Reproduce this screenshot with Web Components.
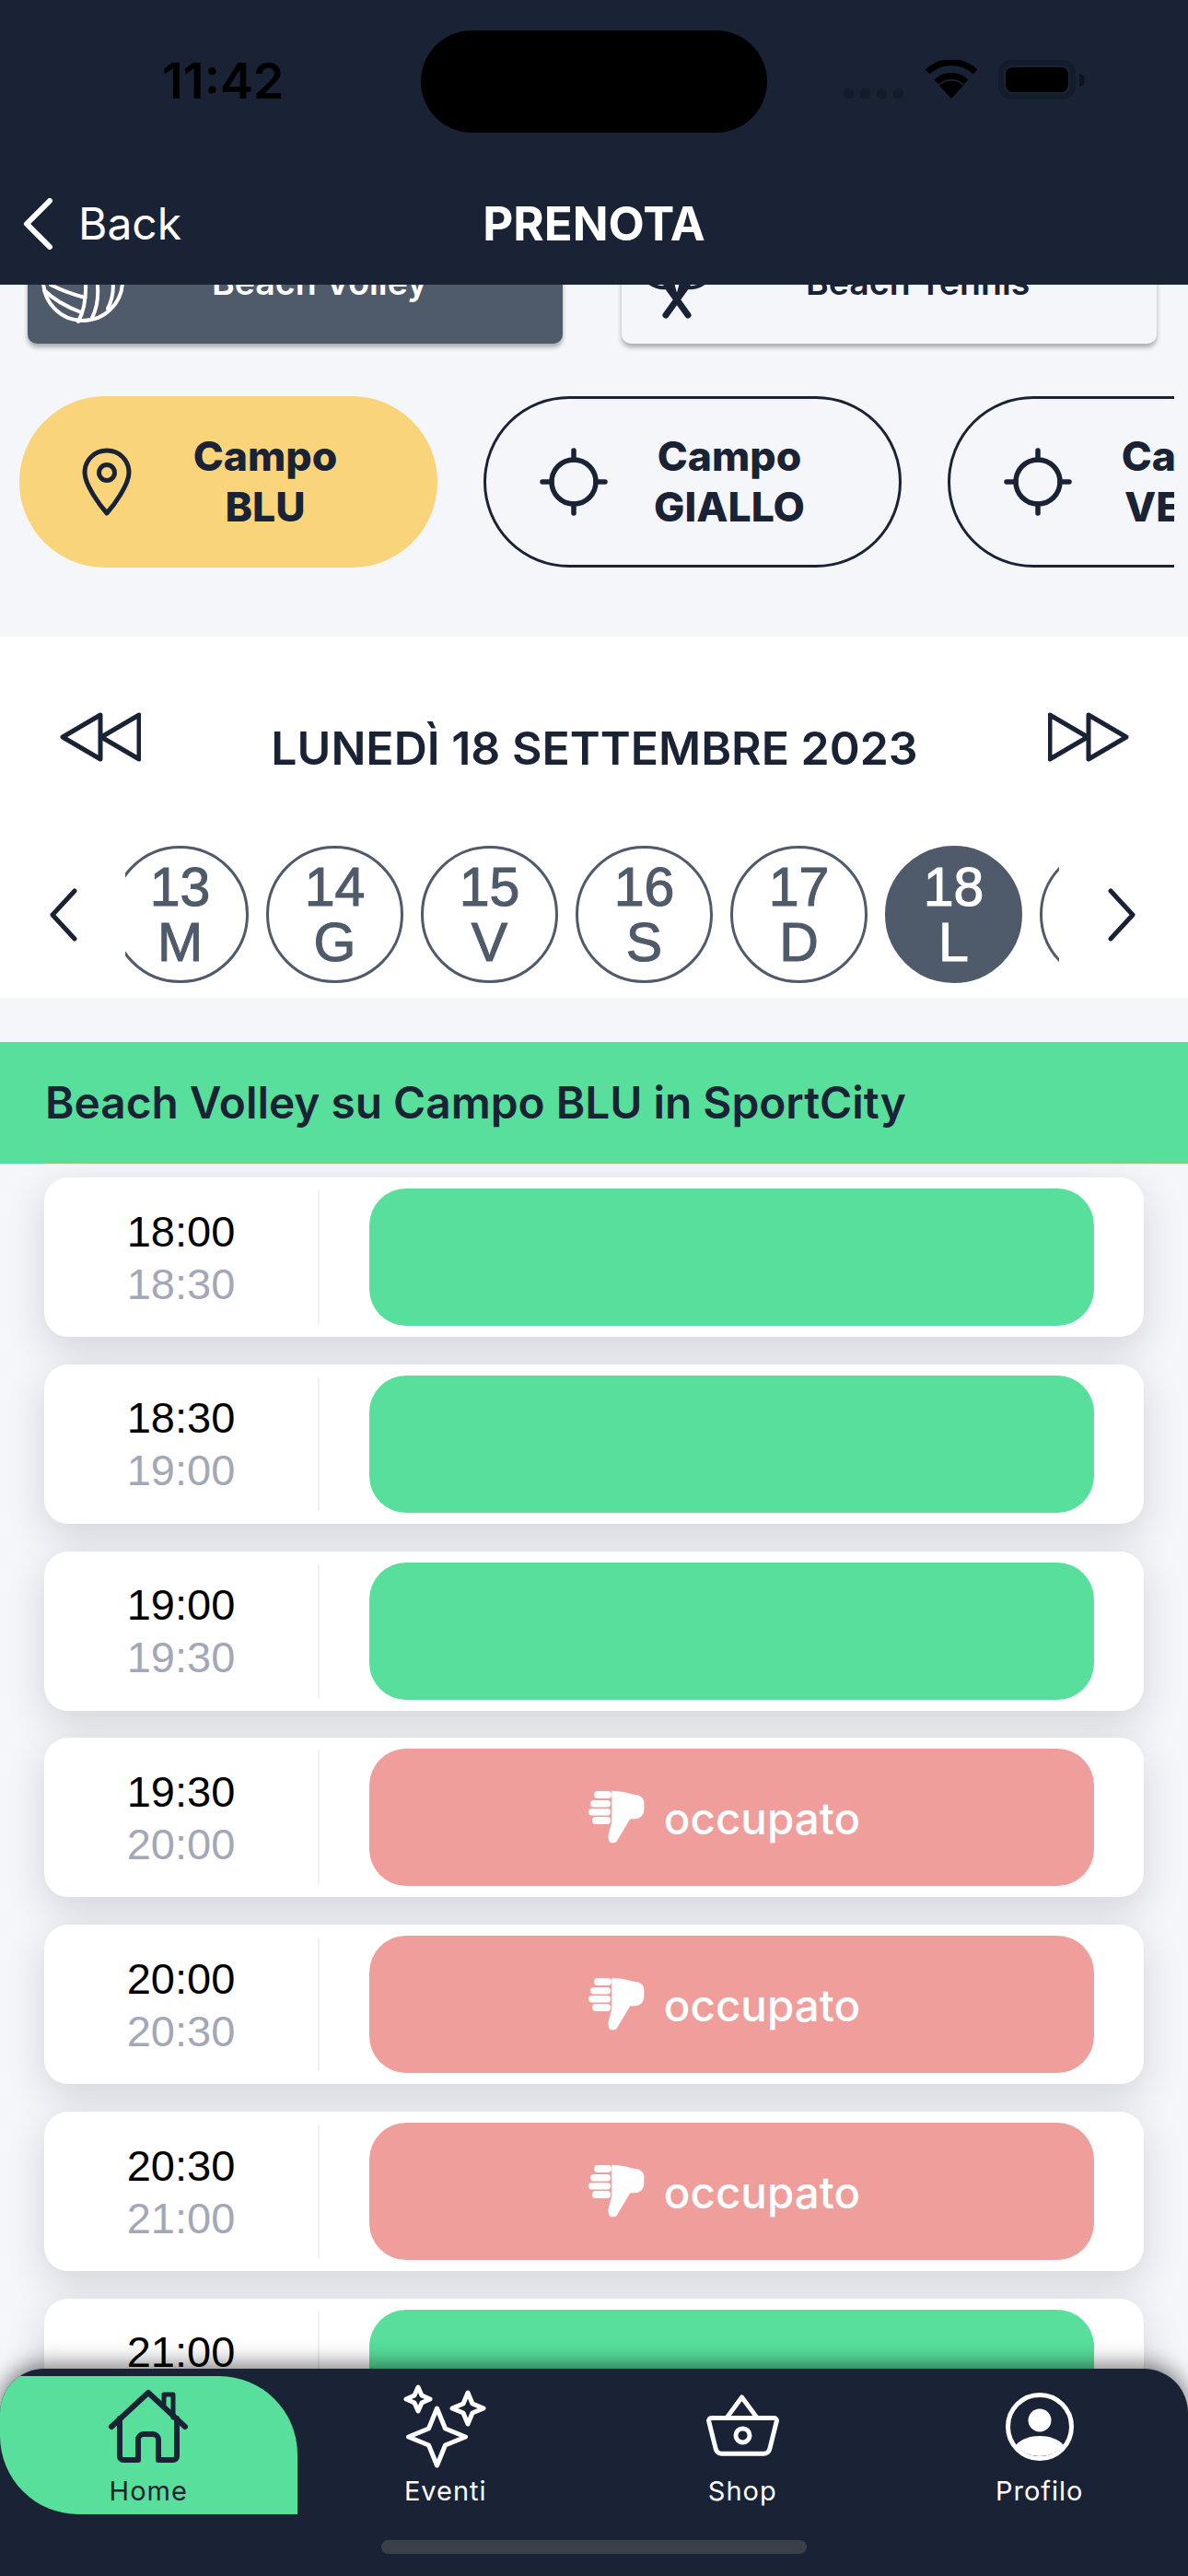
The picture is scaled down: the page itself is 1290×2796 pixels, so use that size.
<!DOCTYPE html>
<html lang="it">
<head>
<meta charset="utf-8">
<title>Prenota</title>
<style>
  html, body { margin: 0; padding: 0; background: #f4f6fa; }
  body { width: 1290px; height: 2796px; overflow: hidden; font-family: "Inter", "Liberation Sans", sans-serif; }
</style>
</head>
<body>
<app-shell>
  <status-bar slot="top"></status-bar>
  <nav-bar slot="top" title="PRENOTA"></nav-bar>

  <sport-row>
    <sport-card active label="Beach Volley">
      <svg slot="icon" width="96" height="96" viewBox="0 0 96 96" fill="none" stroke="#fff" stroke-width="4" stroke-linecap="round">
        <circle cx="48" cy="48" r="43"/>
        <path d="M13 52Q28 60 50 66M6 58Q20 72 46 82M51 50Q52 76 43 92M63 45Q67 70 58 88M80 45Q83 62 75 78"/>
      </svg>
    </sport-card>
    <sport-card label="Beach Tennis">
      <svg slot="icon" width="70" height="96" viewBox="0 0 70 96" fill="none" stroke="#1a2335" stroke-linecap="round">
        <path stroke-width="7" d="M23 85L46 53M47 85L24 53"/>
        <path stroke-width="4" d="M5 50Q17 58 28 54M65 50Q53 58 42 54M35 68L30 50M35 68L40 50"/>
      </svg>
    </sport-card>
  </sport-row>

  <court-row>
    <court-pill active><span>Campo</span><span>BLU</span></court-pill>
    <court-pill><span>Campo</span><span>GIALLO</span></court-pill>
    <court-pill><span>Campo</span><span>VERDE</span></court-pill>
  </court-row>

  <date-panel title="LUNEDÌ 18 SETTEMBRE 2023">
    <day-circle num="13" day="M"></day-circle>
    <day-circle num="14" day="G"></day-circle>
    <day-circle num="15" day="V"></day-circle>
    <day-circle num="16" day="S"></day-circle>
    <day-circle num="17" day="D"></day-circle>
    <day-circle num="18" day="L" active></day-circle>
    <day-circle num="19" day="M"></day-circle>
  </date-panel>

  <section-title>Beach Volley su Campo BLU in SportCity</section-title>

  <slot-list>
    <slot-row from="18:00" to="18:30"></slot-row>
    <slot-row from="18:30" to="19:00"></slot-row>
    <slot-row from="19:00" to="19:30"></slot-row>
    <slot-row from="19:30" to="20:00" busy></slot-row>
    <slot-row from="20:00" to="20:30" busy></slot-row>
    <slot-row from="20:30" to="21:00" busy></slot-row>
    <slot-row from="21:00" to="21:30"></slot-row>
  </slot-list>

  <tab-bar slot="bottom">
    <tab-item active label="Home">
      <svg slot="icon" width="90" height="84" viewBox="0 0 90 84" fill="none" stroke="#1a2335" stroke-width="6" stroke-linecap="round" stroke-linejoin="round">
        <path d="M5 42L45 5L85 42"/>
        <path d="M14 33V74a4 4 0 0 0 4 4H34V56a6 6 0 0 1 6-6h10a6 6 0 0 1 6 6V78H72a4 4 0 0 0 4-4V33"/>
        <path stroke-width="5" d="M62 20V7h10V32"/>
      </svg>
    </tab-item>
    <tab-item label="Eventi">
      <svg slot="icon" width="96" height="96" viewBox="0 0 96 96" fill="none" stroke="#fff" stroke-width="5" stroke-linejoin="round">
        <path d="M38.5 28L47.5 50L69.5 59L47.5 68L38.5 90L29.5 68L7.5 59L29.5 50Z"/>
        <path d="M18 5L22 14L31 18L22 22L18 31L14 22L5 18L14 14Z"/>
        <path d="M72 11L77 23L89 28L77 33L72 45L67 33L55 28L67 23Z"/>
      </svg>
    </tab-item>
    <tab-item label="Shop">
      <svg slot="icon" width="81" height="72" viewBox="0 0 86 76" fill="none" stroke="#fff" stroke-width="5.3" stroke-linejoin="round" stroke-linecap="round">
        <path d="M7 28H79a3 3 0 0 1 3 4L74 64a7 7 0 0 1-7 5H19a7 7 0 0 1-7-5L4 32a3 3 0 0 1 3-4Z"/>
        <path d="M25 27L42 4L59 27"/>
        <circle cx="43" cy="48" r="8"/>
      </svg>
    </tab-item>
    <tab-item label="Profilo">
      <svg slot="icon" width="80" height="80" viewBox="0 0 80 80" fill="none">
        <circle cx="40" cy="40" r="34.5" stroke="#fff" stroke-width="5"/>
        <circle cx="40" cy="33" r="12.5" fill="#fff"/>
        <path fill="#fff" d="M14 60C20 53 30 50 40 50C50 50 60 53 66 60A34 34 0 0 1 14 60Z"/>
      </svg>
    </tab-item>
  </tab-bar>
</app-shell>

<script>
const DARK = '#1a2335';
const SLATE = '#4f5a6b';

class AppShell extends HTMLElement {
  connectedCallback() {
    this.attachShadow({ mode: 'open' });
    this.shadowRoot.innerHTML = `
      <style>
        :host { display: flex; flex-direction: column; position: relative; width: 1290px; height: 2796px; overflow: hidden; }
        header { position: relative; z-index: 2; background: ${DARK}; height: 309px; flex: none; }
        main { flex: 1; overflow: hidden; display: flex; flex-direction: column; }
      </style>
      <header><slot name="top"></slot></header>
      <main><slot></slot></main>
      <slot name="bottom"></slot>
    `;
  }
}

class StatusBar extends HTMLElement {
  connectedCallback() {
    this.attachShadow({ mode: 'open' });
    this.shadowRoot.innerHTML = `
      <style>
        :host { display: grid; grid-template-columns: 457px 376px 1fr; height: 186px; }
        .time { padding: 53px 0 0 176px; font: 600 54px/70px "Inter", sans-serif; color: #000; }
        .island { margin-top: 33px; height: 111px; background: #000; border-radius: 56px; }
        .right { display: flex; align-items: flex-start; padding: 65px 0 0 83px; }
        .dots { display: flex; gap: 7px; margin-top: 31px; margin-right: 23px; }
        .dots i { width: 11px; height: 11px; border-radius: 4px; background: #141c2b; }
        .wifi { display: block; margin-right: 22px; }
        .battery { box-sizing: border-box; width: 84px; height: 43px; border: 6px solid #141c2b; border-radius: 14px; padding: 2px; }
        .battery i { display: block; height: 100%; background: #000; border-radius: 8px; }
        .nub { width: 6px; height: 14px; margin: 15px 0 0 4px; background: #0d1420; border-radius: 0 7px 7px 0; }
      </style>
      <div class="time">11:42</div>
      <div class="island"></div>
      <div class="right">
        <div class="dots"><i></i><i></i><i></i><i></i></div>
        <svg class="wifi" width="58" height="42" viewBox="0 0 58 42" fill="none">
          <path d="M29 42L16 28A19 19 0 0 1 42 28Z" fill="#000"/>
          <path d="M13 24A23 23 0 0 1 45 24M3 13A38 38 0 0 1 55 13" stroke="#000" stroke-width="7"/>
        </svg>
        <div class="battery"><i></i></div>
        <div class="nub"></div>
      </div>
    `;
  }
}

class NavBar extends HTMLElement {
  connectedCallback() {
    this.attachShadow({ mode: 'open' });
    this.shadowRoot.innerHTML = `
      <style>
        :host { display: grid; grid-template-columns: 1fr auto 1fr; align-items: center; height: 114px; color: #fff; }
        .back { display: flex; align-items: center; gap: 27px; padding-left: 25px; font: 400 48px/60px "Inter", sans-serif; }
        .title { font: 700 51px/60px "Inter", sans-serif; }
      </style>
      <div class="back">
        <svg width="33" height="56" viewBox="0 0 33 56" fill="none" stroke="#fff" stroke-width="6" stroke-linecap="round" stroke-linejoin="round"><path d="M29 3L4 28L29 53"/></svg>
        <span>Back</span>
      </div>
      <div class="title">${this.getAttribute('title')}</div>
      <div></div>
    `;
  }
}

class SportRow extends HTMLElement {
  connectedCallback() {
    this.attachShadow({ mode: 'open' });
    this.shadowRoot.innerHTML = `
      <style>
        :host { display: flex; gap: 64px; padding-left: 30px; margin-top: -72px; flex: none; }
      </style>
      <slot></slot>
    `;
  }
}

class SportCard extends HTMLElement {
  connectedCallback() {
    const active = this.hasAttribute('active');
    this.attachShadow({ mode: 'open' });
    this.shadowRoot.innerHTML = `
      <style>
        :host { display: flex; align-items: center; width: 581px; height: 136px; border-radius: 10px;
          background: ${active ? SLATE : '#f4f6fa'}; color: ${active ? '#fff' : DARK};
          box-shadow: 0 4px 5px rgba(0,0,0,.3); }
        .icon { width: 120px; display: flex; justify-content: center; }
        .label { margin: 3px 0 0 80px; font: 600 37.5px/46px "Inter", sans-serif; }
      </style>
      <div class="icon"><slot name="icon"></slot></div>
      <div class="label">${this.getAttribute('label')}</div>
    `;
  }
}

class CourtRow extends HTMLElement {
  connectedCallback() {
    this.attachShadow({ mode: 'open' });
    this.shadowRoot.innerHTML = `
      <style>
        :host { display: flex; gap: 50px; margin: 57px 15px 75px 21px; overflow: hidden; flex: none; }
      </style>
      <slot></slot>
    `;
  }
}

class CourtPill extends HTMLElement {
  connectedCallback() {
    const active = this.hasAttribute('active');
    const pin = '<svg width="56" height="75" viewBox="0 0 56 75" fill="none" stroke="' + DARK + '" stroke-width="5" stroke-linejoin="round"><path d="M28 3C14 3 4 14 4 27C4 40 20 62 28 71C36 62 52 40 52 27C52 14 42 3 28 3Z"/><circle cx="28" cy="27" r="8.5"/></svg>';
    const aim = '<svg width="74" height="74" viewBox="0 0 74 74" fill="none" stroke="' + DARK + '" stroke-width="5.5" stroke-linecap="round"><circle cx="37" cy="37" r="24"/><path d="M37 3V13M37 61V71M3 37H13M61 37H71"/></svg>';
    this.attachShadow({ mode: 'open' });
    this.shadowRoot.innerHTML = `
      <style>
        :host { box-sizing: border-box; display: grid; grid-template-columns: ${active ? 167 : 164}px 200px; align-items: center;
          flex: none; width: 454px; height: 186px; border-radius: 93px; color: ${DARK};
          background: ${active ? '#fad47a' : 'transparent'}; border: ${active ? '0' : '3px solid ' + DARK}; }
        .icon { display: flex; justify-content: center; width: 189px; }
        .text { display: flex; flex-direction: column; align-items: center; white-space: nowrap;
          font: 800 44.5px/55px "Inter", sans-serif; }
        ::slotted(span) { display: block; }
      </style>
      <div class="icon">${active ? pin : aim}</div>
      <div class="text"><slot></slot></div>
    `;
  }
}

class DatePanel extends HTMLElement {
  connectedCallback() {
    this.attachShadow({ mode: 'open' });
    this.shadowRoot.innerHTML = `
      <style>
        :host { display: block; box-sizing: border-box; height: 392px; padding-top: 81px; background: #fff; flex: none; }
        .top { display: flex; justify-content: space-between; align-items: flex-start; padding: 0 62px 0 63px; height: 56px; }
        .title { margin-top: 10px; font: 600 50px/60px "Inter", sans-serif; color: ${DARK}; }
        .days { display: flex; align-items: center; margin-top: 90px; padding-left: 52px; }
        .view { width: 1014px; margin: 0 53px 0 52px; overflow: hidden; display: flex; }
        .inner { display: flex; gap: 19px; margin-left: -15px; }
      </style>
      <div class="top">
        <svg width="90" height="56" viewBox="0 0 90 56" fill="none" stroke="${DARK}" stroke-width="5" stroke-linejoin="round"><path d="M46 4L5 28L46 52ZM88 4L47 28L88 52Z"/></svg>
        <div class="title">${this.getAttribute('title')}</div>
        <svg width="90" height="56" viewBox="0 0 90 56" fill="none" stroke="${DARK}" stroke-width="5" stroke-linejoin="round"><path d="M2 4L43 28L2 52ZM44 4L85 28L44 52Z"/></svg>
      </div>
      <div class="days">
        <svg width="32" height="58" viewBox="0 0 32 58" fill="none" stroke="${DARK}" stroke-width="5" stroke-linecap="round" stroke-linejoin="round"><path d="M29 3L5 29L29 55"/></svg>
        <div class="view"><div class="inner"><slot></slot></div></div>
        <svg width="32" height="58" viewBox="0 0 32 58" fill="none" stroke="${DARK}" stroke-width="5" stroke-linecap="round" stroke-linejoin="round"><path d="M3 3L27 29L3 55"/></svg>
      </div>
    `;
  }
}

class DayCircle extends HTMLElement {
  connectedCallback() {
    const active = this.hasAttribute('active');
    this.attachShadow({ mode: 'open' });
    this.shadowRoot.innerHTML = `
      <style>
        :host { box-sizing: border-box; display: flex; flex-direction: column; align-items: center; justify-content: center;
          flex: none; width: 149px; height: 149px; border-radius: 50%; border: 3px solid ${SLATE};
          background: ${active ? SLATE : '#fff'}; color: ${active ? '#fff' : SLATE};
          font: 400 59px/60px "Liberation Sans", Arial, sans-serif; -webkit-text-stroke: 1.1px currentColor; }
      </style>
      <div>${this.getAttribute('num')}</div>
      <div>${this.getAttribute('day')}</div>
    `;
  }
}

class SectionTitle extends HTMLElement {
  connectedCallback() {
    this.attachShadow({ mode: 'open' });
    this.shadowRoot.innerHTML = `
      <style>
        :host { display: flex; align-items: center; position: relative; z-index: 1; flex: none; box-sizing: border-box;
          height: 132px; margin-top: 48px; padding: 0 0 0 49px; background: #57df9b; color: ${DARK};
          font: 600 47.8px/60px "Inter", sans-serif; }
        .edge { position: absolute; left: 48px; right: 0; bottom: 0; height: 1px; background: #8fc27a; }
      </style>
      <slot></slot>
      <div class="edge"></div>
    `;
  }
}

class SlotList extends HTMLElement {
  connectedCallback() {
    this.attachShadow({ mode: 'open' });
    this.shadowRoot.innerHTML = `
      <style>
        :host { display: flex; flex-direction: column; gap: 29.83px; padding: 15px 48px 0; flex: none; }
      </style>
      <slot></slot>
    `;
  }
}

class SlotRow extends HTMLElement {
  connectedCallback() {
    const busy = this.hasAttribute('busy');
    const label = busy ? `
      <svg width="66" height="64" viewBox="0 0 66 64" fill="#fff">
        <rect x="8" y="3" width="19" height="8" rx="4"/><rect x="4" y="13" width="22" height="7.5" rx="3.7"/>
        <rect x="2" y="22" width="24" height="7.5" rx="3.7"/><rect x="6" y="31" width="20" height="8" rx="4"/>
        <path d="M27.3 2.7C36 3 44 4.5 50.7 6.7C57 6.7 62.3 10 62.3 15V23.3C62.3 29 58 33.3 52.3 33.3H47.3L32.3 58.3C29.5 60 25 59.5 24 56.7L23.3 51.7L27.3 36.7Z"/>
      </svg>
      <span>occupato</span>` : '';
    this.attachShadow({ mode: 'open' });
    this.shadowRoot.innerHTML = `
      <style>
        :host { display: grid; grid-template-columns: 297px 2px 841px; box-sizing: border-box; height: 173px; padding: 12px 0;
          background: #fff; border-radius: 26px; box-shadow: 0 14px 44px rgba(20,25,50,.15); }
        .time { display: flex; flex-direction: column; align-items: center; justify-content: center; font: 400 47px/57px "Liberation Sans", Arial, sans-serif; color: #000; }
        .time .to { color: #a3a8b8; }
        .line { margin: 2px 0; background: #eef0f3; }
        .btn { margin-left: 54px; height: 149px; box-sizing: border-box; padding-right: 18px; border-radius: 40px; display: flex; align-items: center; justify-content: center; gap: 18px;
          background: ${busy ? '#f09e9c' : '#57df9b'}; color: #fff; font: 500 47.5px/60px "Inter", sans-serif; }
        .btn span { padding-top: 2px; }
      </style>
      <div class="time"><div>${this.getAttribute('from')}</div><div class="to">${this.getAttribute('to')}</div></div>
      <div class="line"></div>
      <div class="btn">${label}</div>
    `;
  }
}

class TabBar extends HTMLElement {
  connectedCallback() {
    this.attachShadow({ mode: 'open' });
    this.shadowRoot.innerHTML = `
      <style>
        :host { display: block; position: absolute; left: 0; right: 0; bottom: 0; z-index: 3; height: 225px;
          background: ${DARK}; border-radius: 48px 48px 0 0; box-shadow: 0 -4px 24px rgba(0,0,0,.55); overflow: hidden; }
        .tabs { display: grid; grid-template-columns: repeat(4, 1fr); margin-top: 8px; height: 150px; }
        .home { width: 462px; height: 15px; margin: 28px auto 0; border-radius: 8px; background: #3a3f48; }
      </style>
      <div class="tabs"><slot></slot></div>
      <div class="home"></div>
    `;
  }
}

class TabItem extends HTMLElement {
  connectedCallback() {
    const active = this.hasAttribute('active');
    this.attachShadow({ mode: 'open' });
    this.shadowRoot.innerHTML = `
      <style>
        :host { display: flex; flex-direction: column; align-items: center; height: 150px; padding-top: 5px; box-sizing: border-box;
          background: ${active ? '#57df9b' : 'transparent'}; border-radius: 0 85px 0 85px;
          color: ${active ? DARK : '#fff'}; font: 400 29px/36px "Inter", sans-serif; letter-spacing: 1px; }
        .icon { height: 100px; display: flex; align-items: center; justify-content: center; }
        .label { margin-top: 2px; }
      </style>
      <div class="icon"><slot name="icon"></slot></div>
      <div class="label">${this.getAttribute('label')}</div>
    `;
  }
}

customElements.define('app-shell', AppShell);
customElements.define('status-bar', StatusBar);
customElements.define('nav-bar', NavBar);
customElements.define('sport-row', SportRow);
customElements.define('sport-card', SportCard);
customElements.define('court-row', CourtRow);
customElements.define('court-pill', CourtPill);
customElements.define('date-panel', DatePanel);
customElements.define('day-circle', DayCircle);
customElements.define('section-title', SectionTitle);
customElements.define('slot-list', SlotList);
customElements.define('slot-row', SlotRow);
customElements.define('tab-bar', TabBar);
customElements.define('tab-item', TabItem);
</script>
</body>
</html>
